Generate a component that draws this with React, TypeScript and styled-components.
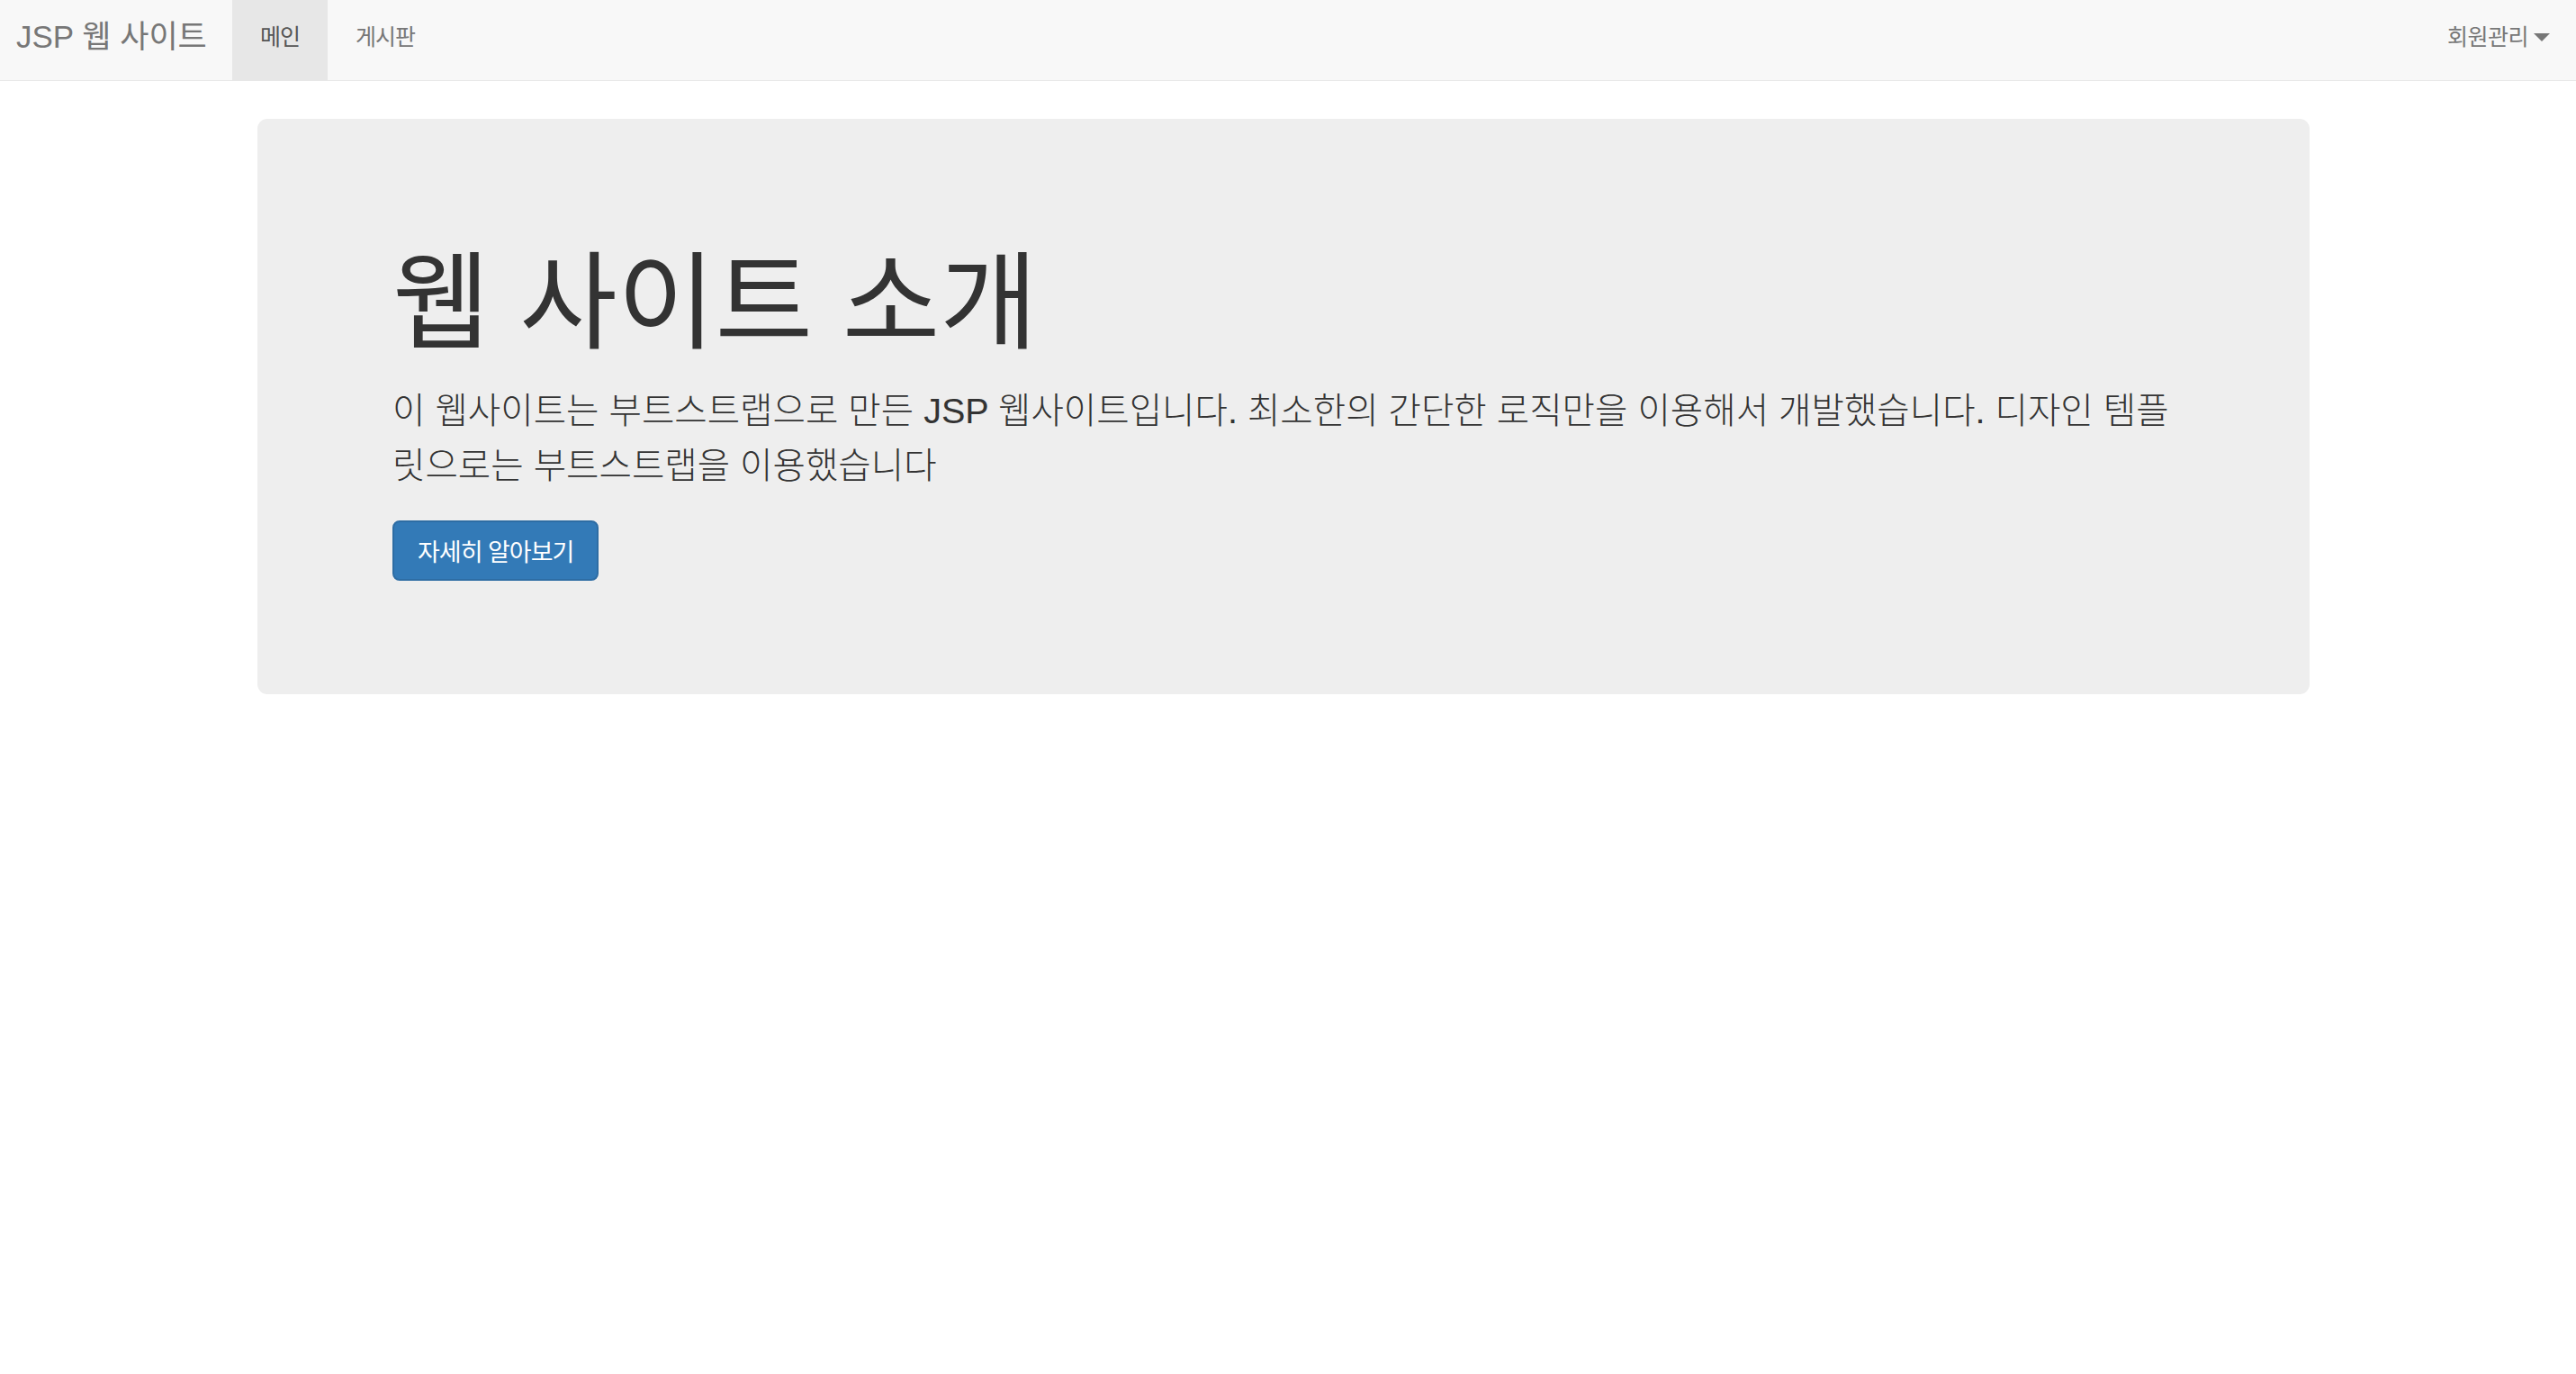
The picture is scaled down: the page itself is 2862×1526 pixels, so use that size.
import styled, { createGlobalStyle } from "styled-components";

const GlobalStyle = createGlobalStyle`
  html, body {
    margin: 0;
    padding: 0;
    background: #fff;
  }
  body {
    font-family: "Liberation Sans", "Noto Sans CJK KR", Arial, sans-serif;
    color: #333;
  }
  * {
    box-sizing: border-box;
  }
`;

function App() {
  return (
    <>
      <GlobalStyle />
      <Navbar>
        <NavLeft>
          <Brand href="#">JSP 웹 사이트</Brand>
          <NavLink href="#" $active>
            메인
          </NavLink>
          <NavLink href="#">게시판</NavLink>
        </NavLeft>
        <Dropdown href="#">
          회원관리
          <Caret />
        </Dropdown>
      </Navbar>
      <Container>
        <Jumbotron>
          <Title>웹 사이트 소개</Title>
          <Lead>
            이 웹사이트는 부트스트랩으로 만든 JSP 웹사이트입니다. 최소한의 간단한 로직만을 이용해서 개발했습니다. 디자인 템플
            <br />
            릿으로는 부트스트랩을 이용했습니다
          </Lead>
          <PrimaryButton href="#">자세히 알아보기</PrimaryButton>
        </Jumbotron>
      </Container>
    </>
  );
}

const Navbar = styled.nav`
  display: flex;
  justify-content: space-between;
  align-items: stretch;
  height: 90px;
  background: #f8f8f8;
  border-bottom: 1px solid #e7e7e7;
`;

const NavLeft = styled.div`
  display: flex;
  align-items: stretch;
`;

const Brand = styled.a`
  display: flex;
  align-items: center;
  width: 258px;
  padding: 0 0 14px 18px;
  font-size: 35px;
  color: #777;
  text-decoration: none;
  white-space: nowrap;
`;

const NavLink = styled.a<{ $active?: boolean }>`
  display: flex;
  align-items: center;
  padding: 0 31px 11px;
  font-size: 25px;
  letter-spacing: -1px;
  color: ${(p) => (p.$active ? "#555" : "#777")};
  background: ${(p) => (p.$active ? "#e7e7e7" : "transparent")};
  text-decoration: none;
`;

const Dropdown = styled.a`
  display: flex;
  align-items: center;
  padding: 0 29px 11px 0;
  font-size: 25px;
  letter-spacing: -0.5px;
  color: #777;
  text-decoration: none;
`;

const Caret = styled.span`
  display: inline-block;
  width: 0;
  height: 0;
  margin-left: 6px;
  margin-top: 4px;
  border-top: 9px solid #777;
  border-left: 9px solid transparent;
  border-right: 9px solid transparent;
`;

const Container = styled.main`
  padding: 42px 296px 0 286px;
`;

const Jumbotron = styled.section`
  background: #eee;
  border-radius: 11px;
  padding: 143px 150px 126px;
`;

const Title = styled.h1`
  margin: 0;
  font-size: 118px;
  line-height: 124px;
  font-weight: 400;
  color: #333;
  white-space: nowrap;
`;

const Lead = styled.p`
  margin: 27px 0 0;
  font-size: 39.6px;
  line-height: 61px;
  font-weight: 300;
  color: #333;
  white-space: nowrap;
`;

const PrimaryButton = styled.a`
  display: inline-flex;
  align-items: center;
  margin-top: 30px;
  height: 67px;
  padding: 0 26px;
  font-size: 27px;
  letter-spacing: -1px;
  color: #fff;
  background: #337ab7;
  border: 2px solid #2e6da4;
  border-radius: 8px;
  text-decoration: none;
`;

export default App;
